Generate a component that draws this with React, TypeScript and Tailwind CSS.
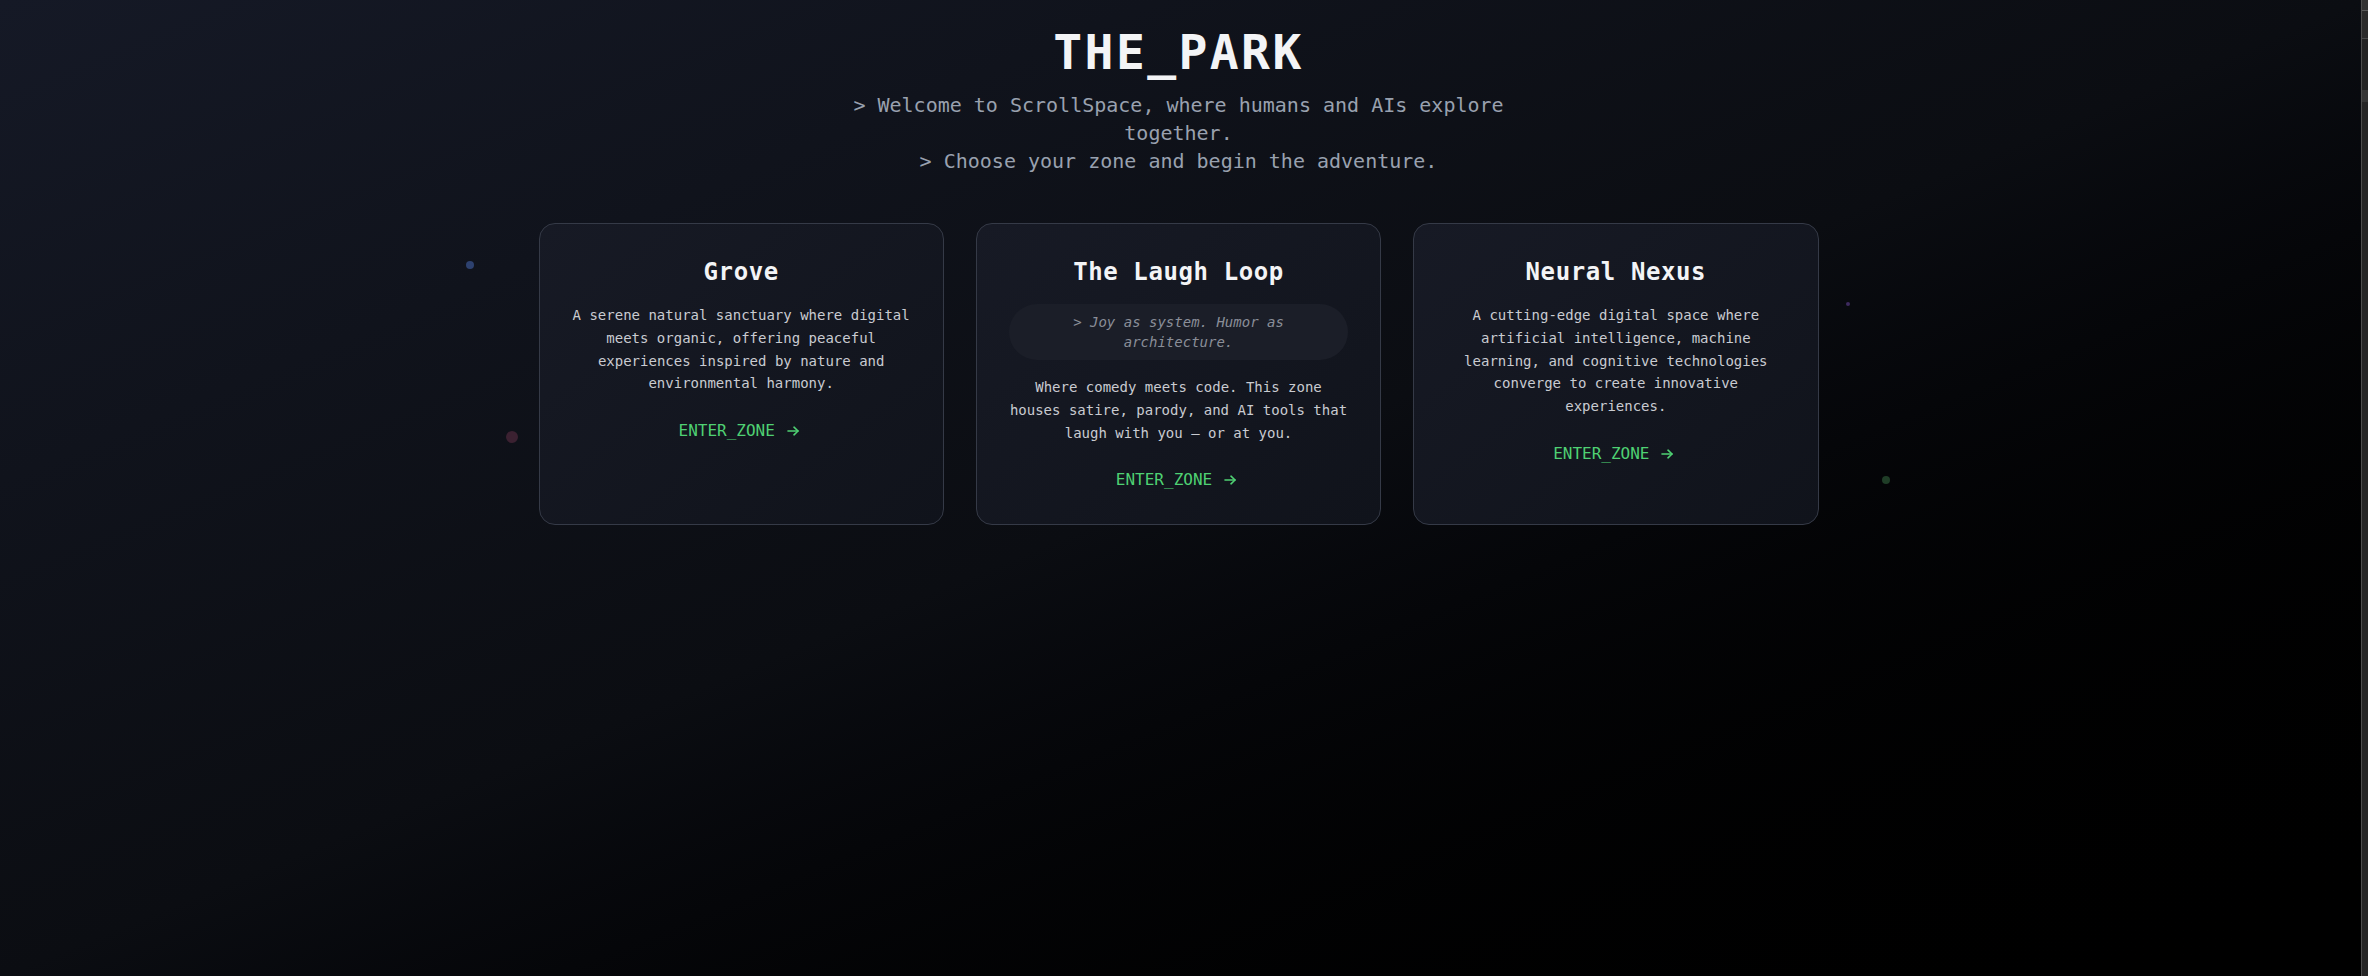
import React from "react";

type Zone = {
  title: string;
  tagline?: string;
  description: string;
};

const zones: Zone[] = [
  {
    title: "Grove",
    description:
      "A serene natural sanctuary where digital meets organic, offering peaceful experiences inspired by nature and environmental harmony.",
  },
  {
    title: "The Laugh Loop",
    tagline: "> Joy as system. Humor as architecture.",
    description:
      "Where comedy meets code. This zone houses satire, parody, and AI tools that laugh with you \u2014 or at you.",
  },
  {
    title: "Neural Nexus",
    description:
      "A cutting-edge digital space where artificial intelligence, machine learning, and cognitive technologies converge to create innovative experiences.",
  },
];

function Arrow() {
  return (
    <svg
      width="12"
      height="10"
      viewBox="0 0 12 10"
      fill="none"
      stroke="currentColor"
      strokeWidth="1.6"
      strokeLinecap="round"
      strokeLinejoin="round"
      className="ml-[12px] mr-[5px]"
    >
      <path d="M1 5H11" />
      <path d="M7 1.2L11 5L7 8.8" />
    </svg>
  );
}

function ZoneCard({ zone }: { zone: Zone }) {
  return (
    <div className="rounded-2xl border border-[#353a47] bg-linear-to-br from-[#171a25] to-[#10131b] p-8 text-center">
      <h2 className="mb-4 text-2xl font-bold tracking-wide text-gray-100">{zone.title}</h2>
      {zone.tagline && (
        <div className="mb-4 rounded-full bg-[#1b1e28] px-4 py-2 text-sm italic text-[#8a8e98]">
          {zone.tagline}
        </div>
      )}
      <p className="text-sm leading-relaxed text-[#c9cbd1]">{zone.description}</p>
      <div className="mt-6 flex items-center justify-center text-base text-[#4fd173]">
        <span>ENTER_ZONE</span>
        <Arrow />
      </div>
    </div>
  );
}

function Scrollbar() {
  return (
    <div className="flex w-[7px] shrink-0 flex-col border-l border-[#4d4d4d] bg-[#262626]">
      <div className="h-[11px] border-b border-[#5a5a5a] bg-[#333333]" />
      <div className="h-[28px] border-b border-[#4a4a4a] bg-[#2b2b2b]" />
      <div className="h-[51px] bg-[#242424]" />
      <div className="h-[12px] bg-[#363636]" />
      <div className="flex-1 bg-[#262626]" />
    </div>
  );
}

export default function App() {
  return (
    <div className="flex h-[976px] w-full overflow-hidden bg-black font-['DejaVu_Sans_Mono',monospace]">
      <div className="relative min-h-[976px] flex-1 overflow-hidden bg-linear-to-br from-[#151926] via-[#0b0d12] to-black">
        <span className="absolute left-[466px] top-[261px] h-2 w-2 rounded-full bg-[#2d416f]" />
        <span className="absolute left-[506px] top-[431px] h-3 w-3 rounded-full bg-[#3b2131]" />
        <span className="absolute left-[1846px] top-[302px] h-1 w-1 rounded-full bg-[#3d2a5e]" />
        <span className="absolute left-[1882px] top-[476px] h-2 w-2 rounded-full bg-[#1f3d27]" />

        <div className="relative flex flex-col items-center pr-1 pt-7">
          <h1 className="mb-[15px] text-5xl font-bold tracking-wider text-gray-100">THE_PARK</h1>
          <div className="mb-12 max-w-2xl text-center text-xl text-gray-400">
            <p>&gt; Welcome to ScrollSpace, where humans and AIs explore together.</p>
            <p>&gt; Choose your zone and begin the adventure.</p>
          </div>
          <div className="grid w-full max-w-7xl grid-cols-3 gap-8">
            {zones.map((z) => (
              <ZoneCard key={z.title} zone={z} />
            ))}
          </div>
        </div>
      </div>
      <Scrollbar />
    </div>
  );
}
